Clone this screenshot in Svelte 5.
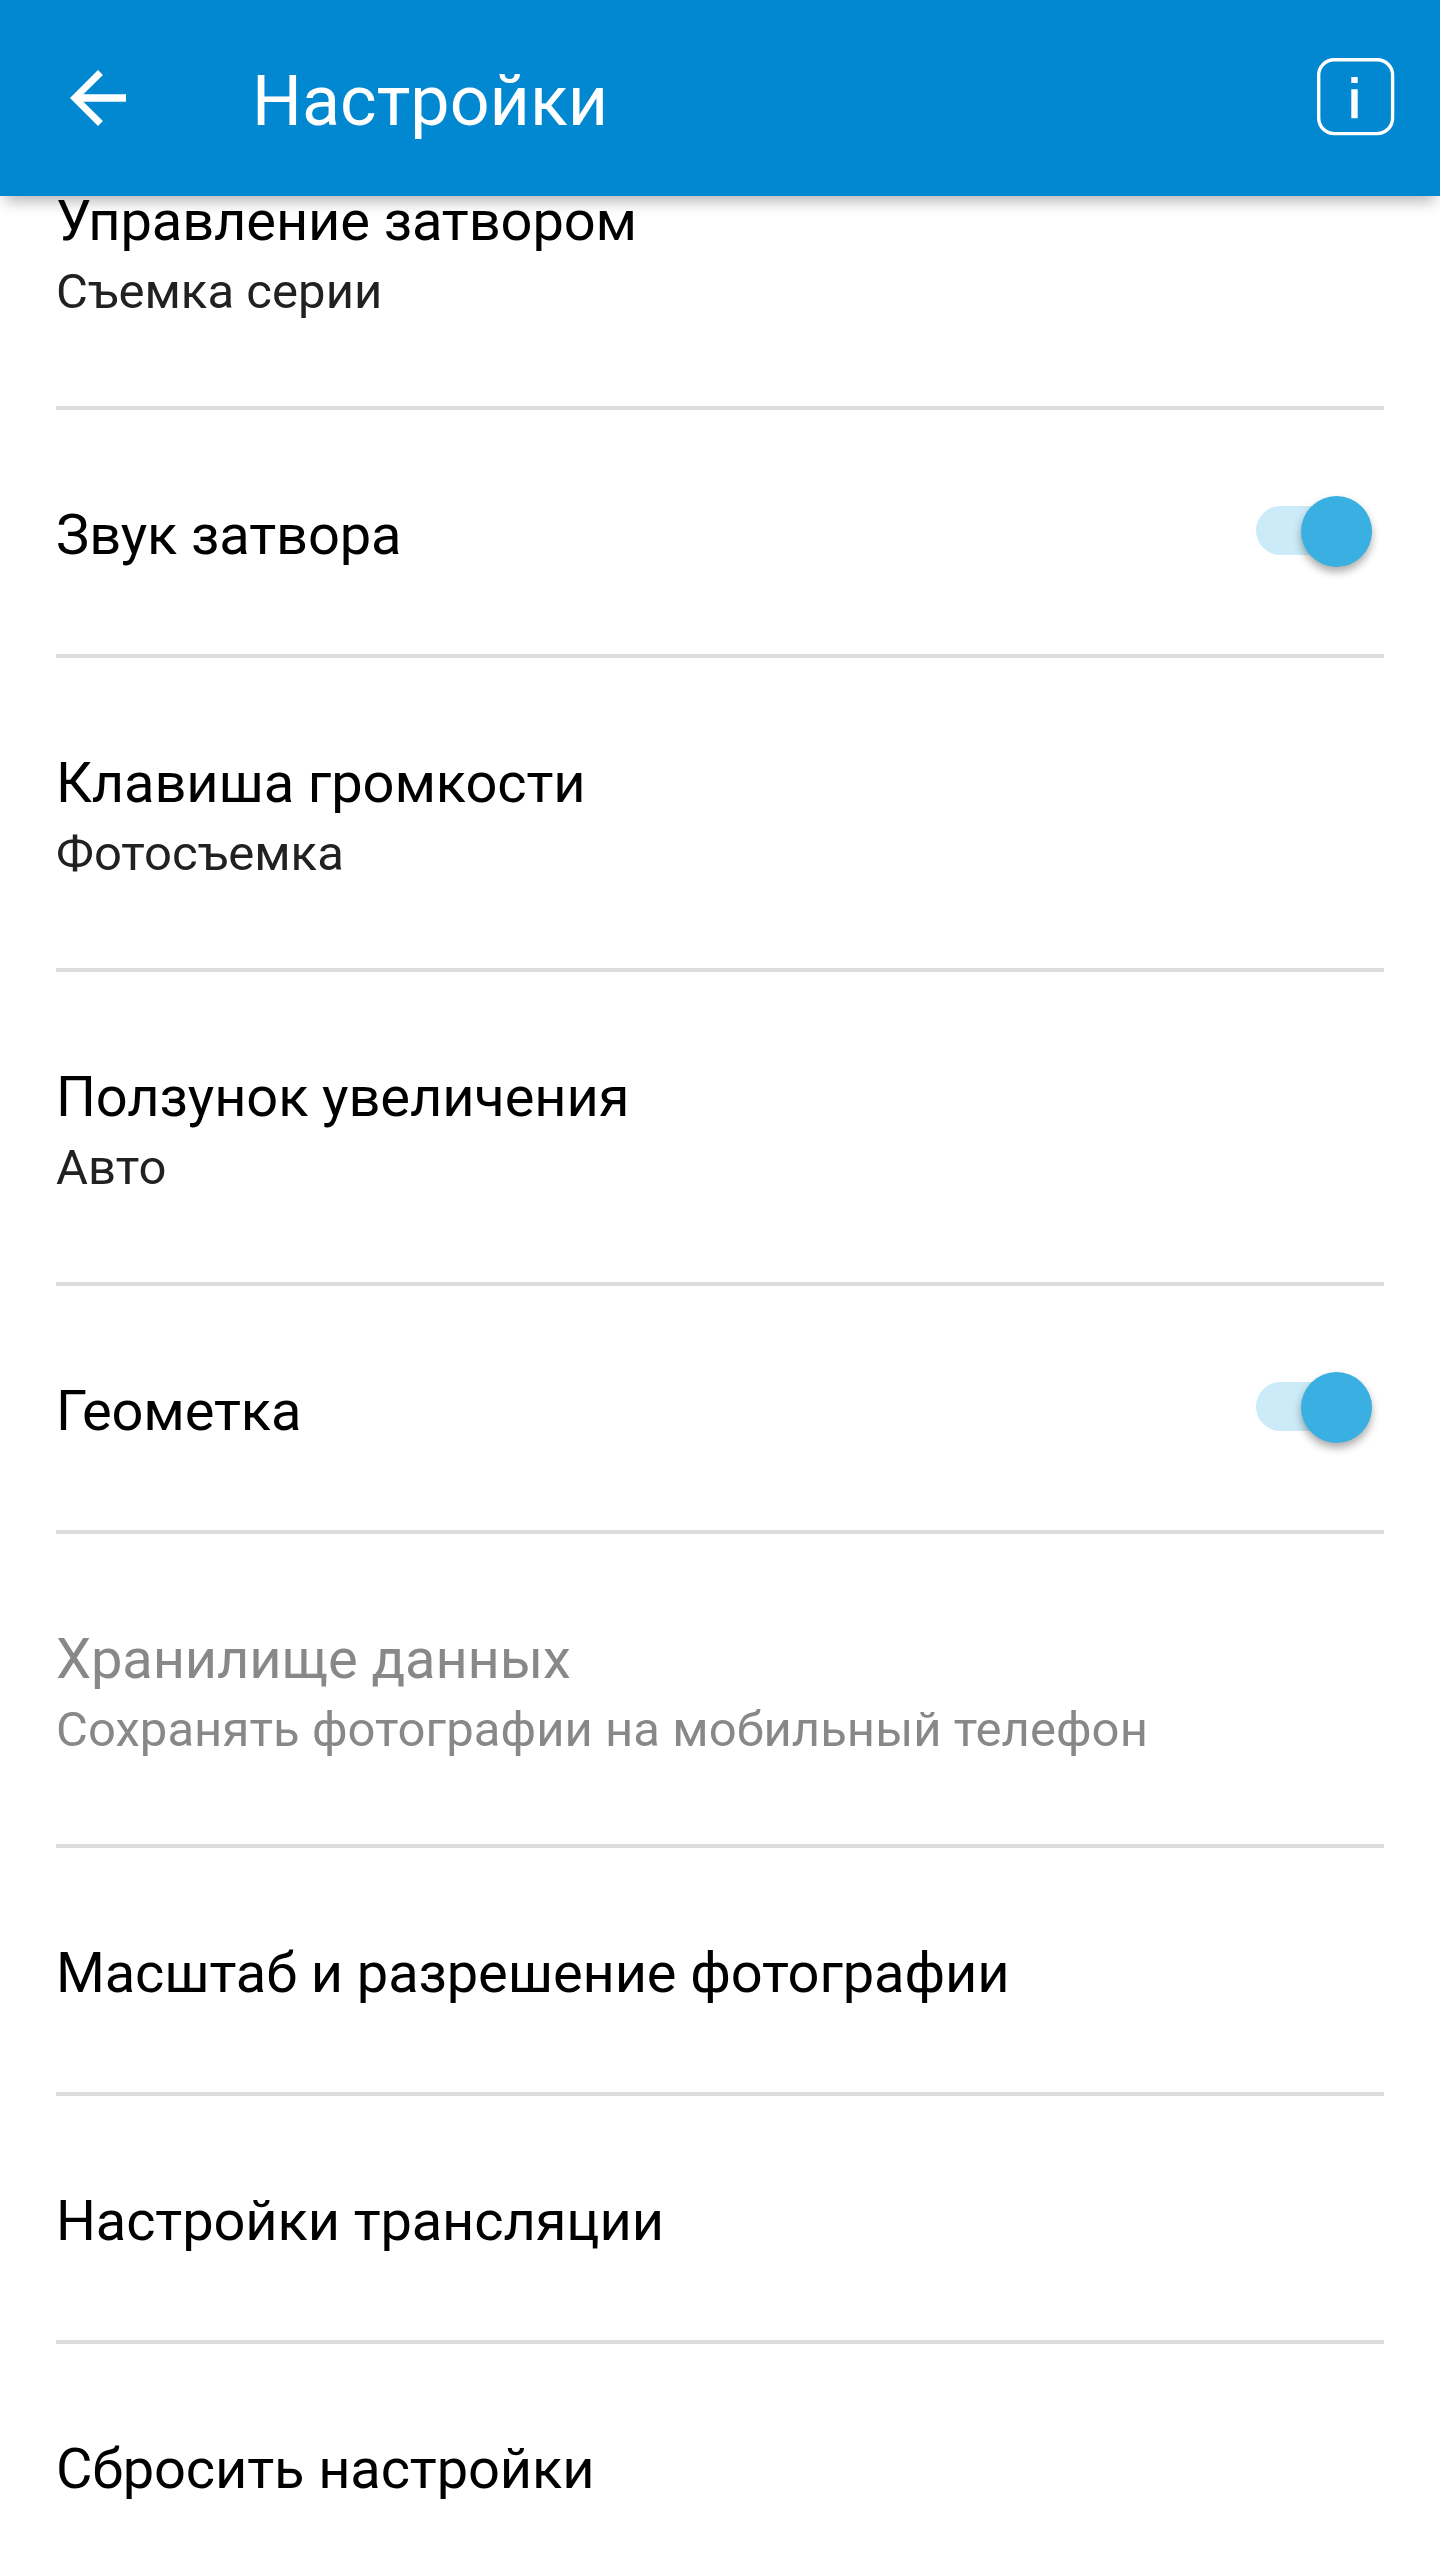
<script lang="ts">
	interface Setting {
		title: string;
		summary?: string;
		checked?: boolean;
		disabled?: boolean;
	}

	let settings: Setting[] = $state([
		{ title: 'Управление затвором', summary: 'Съемка серии' },
		{ title: 'Звук затвора', checked: true },
		{ title: 'Клавиша громкости', summary: 'Фотосъемка' },
		{ title: 'Ползунок увеличения', summary: 'Авто' },
		{ title: 'Геометка', checked: true },
		{ title: 'Хранилище данных', summary: 'Сохранять фотографии на мобильный телефон', disabled: true },
		{ title: 'Масштаб и разрешение фотографии' },
		{ title: 'Настройки трансляции' },
		{ title: 'Сбросить настройки' }
	]);
</script>

<div class="screen">
	<header class="toolbar">
		<button class="icon-btn" aria-label="Назад">
			<svg width="84" height="84" viewBox="0 0 24 24">
				<path d="M20 10.9H7.83l5.59-5.49L12 4l-8 8 8 8 1.41-1.41L7.83 13.1H20v-2.2z" fill="#fff" />
			</svg>
		</button>
		<h1>Настройки</h1>
		<button class="icon-btn" aria-label="Информация">
			<svg width="80" height="80" viewBox="0 0 80 80">
				<rect x="2.7" y="1.7" width="73.9" height="73.9" rx="15.5" fill="none" stroke="#fff" stroke-width="3.4" />
				<path d="M35.3 19h6.4v6h-6.4zM35.3 31.3h6.4v28.9h-6.4z" fill="#fff" />
			</svg>
		</button>
	</header>

	<main>
		{#each settings as item}
			<section class="row" class:tall={item.summary} class:disabled={item.disabled}>
				<div class="text">
					<div class="title">{item.title}</div>
					{#if item.summary}
						<div class="summary">{item.summary}</div>
					{/if}
				</div>
				{#if item.checked !== undefined}
					<button
						class="switch"
						class:on={item.checked}
						role="switch"
						aria-checked={item.checked}
						aria-label={item.title}
						onclick={() => (item.checked = !item.checked)}
					>
						<span class="thumb"></span>
					</button>
				{/if}
			</section>
		{/each}
	</main>
</div>

<style>
	:global(body) {
		background: #fff;
	}

	.screen {
		display: flex;
		flex-direction: column;
		height: 2560px;
		overflow: hidden;
		font-family: Roboto, sans-serif;
		color: #000;
	}

	.toolbar {
		display: flex;
		flex: none;
		align-items: center;
		box-sizing: border-box;
		height: 196px;
		padding: 0 44px 0 56px;
		background: #0288d1;
		box-shadow: 0 10px 14px -5px rgba(0, 0, 0, 0.3);
		z-index: 1;
	}

	h1 {
		flex: 1;
		margin: 6px 0 0 112px;
		font-size: 70px;
		font-weight: 400;
		color: #fff;
	}

	.icon-btn {
		display: flex;
		padding: 0;
		border: 0;
		background: none;
	}

	/* list is scrolled partly under the toolbar */
	main {
		display: flex;
		flex-direction: column;
		margin-top: -100px;
		padding: 0 56px;
	}

	.row {
		display: flex;
		flex: none;
		align-items: flex-start;
		justify-content: space-between;
		box-sizing: border-box;
		height: 248px;
		padding-top: 90px;
		border-bottom: 4px solid #dcdcdc;
	}

	.row.tall {
		height: 314px;
	}

	.title {
		font-size: 56px;
		line-height: 70px;
		letter-spacing: -0.12px;
	}

	.summary {
		font-size: 49px;
		line-height: 71px;
		letter-spacing: 0.06px;
		color: #212121;
	}

	.disabled .title,
	.disabled .summary {
		color: #888;
	}

	.switch {
		display: flex;
		align-items: center;
		width: 116px;
		height: 49px;
		margin: 6px 12px 0 0;
		padding: 0;
		border: 0;
		border-radius: 25px;
		background: #ccc;
	}

	.switch.on {
		justify-content: flex-end;
		background: #cbebf8;
	}

	.thumb {
		width: 71px;
		height: 71px;
		margin-top: 2px;
		border-radius: 50%;
		background: #f1f1f1;
		box-shadow: 0 5px 8px rgba(0, 0, 0, 0.33);
	}

	.on .thumb {
		background: #3aafe1;
	}
</style>
